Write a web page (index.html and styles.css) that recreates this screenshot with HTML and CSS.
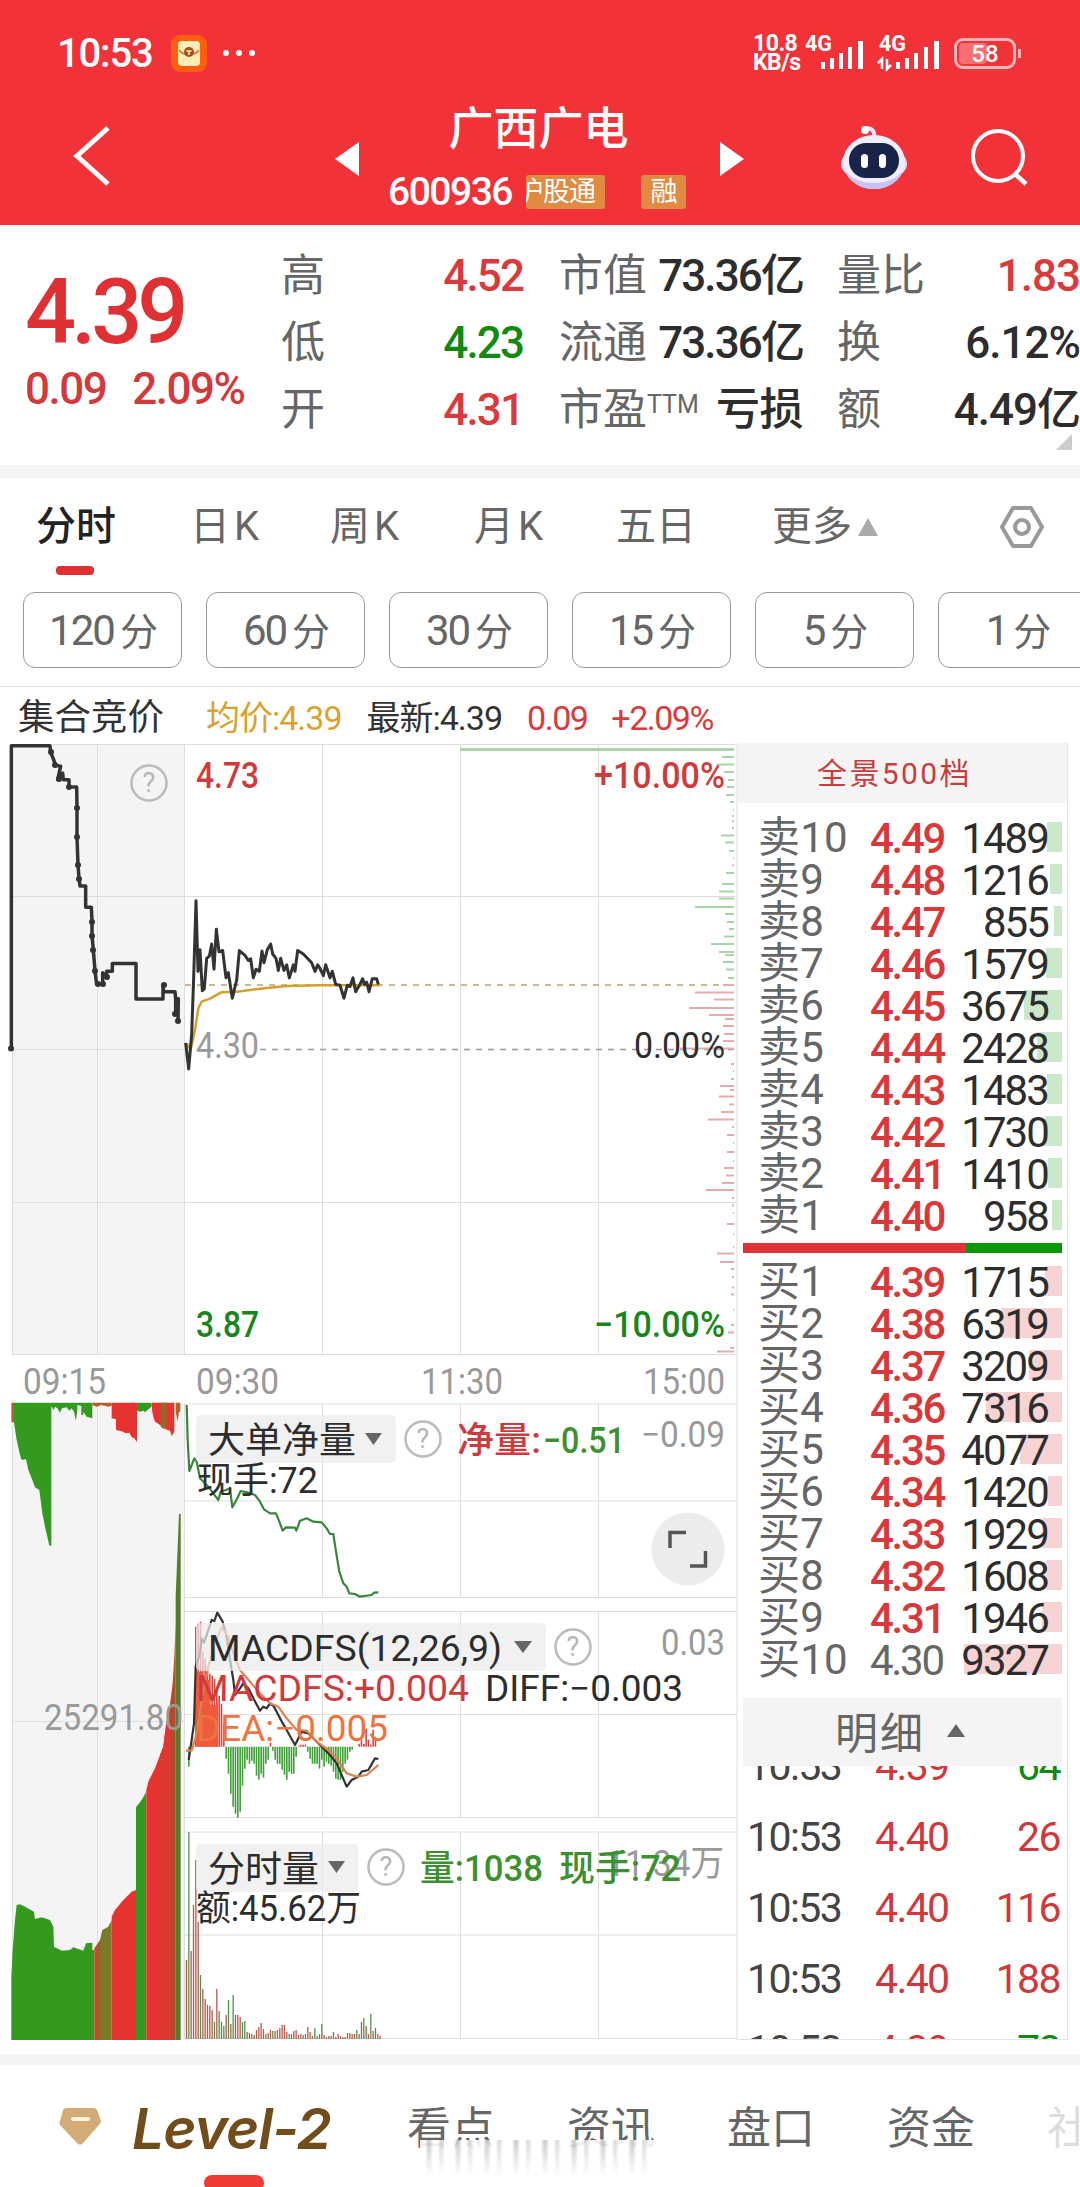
FILE: index.html
```html
<!DOCTYPE html>
<html lang="zh-CN">
<head>
<title>广西广电 600936</title>
<meta charset="utf-8" />
<meta name="viewport" content="width=device-width, initial-scale=1.0" />
<link rel="stylesheet" href="styles.css">
</head>
<body>
<header class="topBar">
<div class="statusBar">
	<span class="clock">10:53</span>
	<svg class="appIcon" width="36" height="37" viewBox="0 0 36 37"><rect width="36" height="37" rx="9" fill="#ff5d10"/><rect x="7" y="6" width="22" height="25" rx="4" fill="#ffedb5"/><path d="M8 15c4 6 16 6 20 0" fill="none" stroke="#c98a3a" stroke-width="2"/><circle cx="18" cy="17" r="5" fill="#a4521c"/><path d="M15.500 16h5M18 16v4" stroke="#ffedb5" stroke-width="1.500"/></svg>
	<svg class="dots" width="34" height="8" viewBox="0 0 34 8" fill="#fff"><circle cx="4" cy="4" r="3"/><circle cx="17" cy="4" r="3"/><circle cx="30" cy="4" r="3"/></svg>
	<span class="speed">10.8<br>KB/s</span>
	<svg class="signals" width="149" height="38" viewBox="0 0 149 38">
		<g fill="#fff">
			<text x="0" y="17" textLength="27" lengthAdjust="spacingAndGlyphs">4G</text>
			<path d="M16 28h4v7h-4zM25 24h4v11h-4zM34 19h4v16h-4zM43 13h4v22h-4zM53 7h5v28h-5z"/>
			<text x="74" y="17" textLength="27" lengthAdjust="spacingAndGlyphs">4G</text>
			<path d="M91 28h4v7h-4zM100 24h4v11h-4zM109 19h4v16h-4zM119 13h4v22h-4zM129 7h5v28h-5z"/>
		</g>
		<path d="M77 35V25l-4 4M82 25v10l4-4" fill="none" stroke="#fff" stroke-width="2.500"/>
	</svg>
	<div class="battery"><i></i><b>58</b></div>
</div>
<div class="titleBar">
	<svg class="back" width="40" height="64" viewBox="0 0 40 64"><path d="M36 4 5 32l31 28" fill="none" stroke="#fff" stroke-width="5"/></svg>
	<svg class="prev" width="24" height="34" viewBox="0 0 24 34"><path d="M24 0v34L0 17z" fill="#fff"/></svg>
	<div class="stock">
		<h1>广西广电</h1>
		<div class="code"><span>600936</span><em class="cut"><i>沪股通</i></em><em class="margin">融</em></div>
	</div>
	<svg class="next" width="24" height="34" viewBox="0 0 24 34"><path d="M0 0v34l24-17z" fill="#fff"/></svg>
	<svg class="robot" width="68" height="66" viewBox="0 0 68 66">
		<path d="M34 12c1-6-2-9-9-9" fill="none" stroke="#e3e3fb" stroke-width="4"/><circle cx="25" cy="5" r="4" fill="#fff"/>
		<rect x="1" y="28" width="66" height="22" rx="11" fill="#dcdcfa"/>
		<ellipse cx="34" cy="37" rx="31" ry="27" fill="#f0edff"/>
		<path d="M6 46c7 24 49 24 56 0-9 16-47 16-56 0z" fill="#c8c2f6"/>
		<rect x="9" y="18" width="50" height="35" rx="17" fill="#182448"/>
		<rect x="21" y="29" width="7" height="14" rx="3.500" fill="#fff"/><rect x="39" y="29" width="7" height="14" rx="3.500" fill="#fff"/>
	</svg>
	<svg class="search" width="60" height="60" viewBox="0 0 60 60"><circle cx="28" cy="28" r="25" fill="none" stroke="#fff" stroke-width="4"/><path d="M45 46 56 56" stroke="#fff" stroke-width="4.500"/></svg>
</div>
</header>

<section class="quote">
<div class="last">
	<div class="price">4.39</div>
	<div class="change"><span>0.09</span><span>2.09%</span></div>
</div>
<dl class="stats high">
	<dt>高</dt><dd class="up">4.52</dd>
	<dt>低</dt><dd class="down">4.23</dd>
	<dt>开</dt><dd class="up">4.31</dd>
</dl>
<dl class="stats cap">
	<dt>市值</dt><dd>73.36亿</dd>
	<dt>流通</dt><dd>73.36亿</dd>
	<dt>市盈<sup>TTM</sup></dt><dd class="loss">亏损</dd>
</dl>
<dl class="stats ratio">
	<dt>量比</dt><dd class="up">1.83</dd>
	<dt>换</dt><dd>6.12%</dd>
	<dt>额</dt><dd>4.49亿</dd>
</dl>
<i class="corner"></i>
</section>

<nav class="tabs">
	<a class="active">分时</a><a class="k">日K</a><a class="k">周K</a><a class="k">月K</a><a>五日</a><a>更多<i></i></a>
	<svg width="44" height="42" viewBox="0 0 44 42" fill="none" stroke="#999" stroke-width="4"><path d="M13 2h18l11 19-11 19H13L2 21z" stroke-linejoin="round"/><circle cx="22" cy="21" r="7"/></svg>
</nav>
<div class="periods">
	<a>120<span>分</span></a><a>60<span>分</span></a><a>30<span>分</span></a><a>15<span>分</span></a><a>5<span>分</span></a><a>1<span>分</span></a>
</div>
<div class="legend">
	<b>集合竞价</b><span class="avg">均价:4.39</span><span>最新:4.39</span><span class="up">0.09</span><span class="up">+2.09%</span>
</div>

<main class="board">
<svg class="chart" width="738" height="1300" viewBox="0 743 738 1300">
	<rect x="12" y="744" width="173" height="610" fill="#f4f4f4"/>
	<rect x="12" y="1403" width="173" height="637" fill="#f4f4f4"/>
	<path class="grid" d="M12 744.500H737M12 896.500H737M12 1049.500H185M12 1202.500H737M12 1354.500H737M12.500 744V1354M97.500 744V1354M184.500 744V1354M322.500 744V1354M460.500 744V1354M598.500 744V1354M737 744V2040M12.500 1403V2040M97.500 1403V2040M184.500 1403V2040M12 1721.500H185"/>
	<path class="grid" d="M185 1404H737M185 1501H737M185 1597.500H737M185 1611.500H737M185 1714.500H737M185 1817.500H737M185 1832H737M185 1935H737M185 2038.500H737M322.500 1404V1597M460.500 1404V1597M598.500 1404V1597M322.500 1611V1817M460.500 1611V1817M598.500 1611V1817M322.500 1832V2038M460.500 1832V2038M598.500 1832V2038"/>

	<path d="M185 985H737" stroke="#b8a468" stroke-width="1.500" stroke-dasharray="6 6"/>
	<path d="M260 1049.500H737" stroke="#999" stroke-width="1.500" stroke-dasharray="6 6"/>
	<g id="depth"></g>

	<g class="line" transform="translate(0 735) scale(.33333 .43365)">
		<path class="thick" d="M34 723V25H150L152 40 160 55 167 70 182 72 173 103 188 88 190 103H207V120H230L231 168 231 235 234 300 237 330 240 348H257V397H274L276 430 276 463 280 495 285 545 290 575H308V548L320 560V545H337V527H408V609H489V577L491 592H525L527 608 527 643 535 608 534 660"/>
		<path class="gold" d="M560 712 572 725 585 680 595 630 605 615 630 608 665 593 710 592 780 585 860 579 960 577 1140 577"/>
		<path d="M557 710 566 770 575 690 581 560 588 382 594 545 600 495 607 590 613 585 620 515 628 510 635 482 642 540 649 448 657 500 668 497 678 560 685 548 697 607 710 565 718 497 735 508 745 520 752 516 760 560 768 540 778 545 786 498 792 525 802 495 812 482 818 505 828 515 835 543 842 515 852 543 860 530 868 560 880 530 885 545 893 497 910 505 935 525 945 545 953 530 960 538 970 555 977 530 990 560 997 545 1007 575 1020 577 1032 607 1042 577 1050 580 1059 560 1067 592 1080 575 1088 562 1093 575 1100 570 1107 592 1117 562 1130 562 1135 575"/>
	</g>
	<g fill="#333"><circle cx="11" cy="1048.500" r="3"/><circle cx="51" cy="752" r="3"/><circle cx="55" cy="765" r="3"/><circle cx="59" cy="779" r="3"/><circle cx="69" cy="787" r="3"/><circle cx="77" cy="808" r="3"/><circle cx="77" cy="837" r="3"/><circle cx="78" cy="865" r="3"/><circle cx="79" cy="879" r="3"/><circle cx="92" cy="922" r="3"/><circle cx="92" cy="936" r="3"/><circle cx="93" cy="950" r="3"/><circle cx="95" cy="971" r="3"/><circle cx="98" cy="984" r="3"/><circle cx="103" cy="984" r="3"/><circle cx="107" cy="977" r="3"/><circle cx="164" cy="985" r="3"/><circle cx="175" cy="1014" r="3"/><circle cx="178" cy="1021" r="3"/></g>

	<!-- auction panel: net volume hangs from the top, matched volume stands on the bottom -->
	<g transform="translate(0 1390) scale(.33333)">
		<path fill="#339a1f" d="M42 38V97L50 150 60 195 65 210 78 207 85 240 95 265 105 292 118 300 127 370 135 410 142 440 148 467H154V38zM154 38V48L160 60 165 50 172 55 180 68 186 55 200 52 208 62 215 55 222 66 228 93 232 60V45L244 48V75H250V65L260 80 277 85V38zM411 38V62L420 65 430 62 435 67 445 58 455 50V38z"/>
		<path fill="#b5602c" d="M34 38V97H42V38zM277 38V45L290 50 305 45 325 50 335 47V38zM527 38V65L533 95 537 65H541V38z"/>
		<path fill="#e73330" d="M335 38V85L348 88V120L370 125 376 130 388 128 395 142 403 145 411 157V38zM456 38V60L460 80 465 95 480 105 497 118 510 122 515 138 523 125V38z"/>
		<path fill="#8c6a2c" d="M482 38V110L492 117 499 105V38z"/>
		<path fill="#339a1f" d="M34 1950V1760L38 1680 45 1590 50 1545 60 1543 75 1550 102 1565 105 1587 125 1582 150 1590 160 1610 162 1670 185 1682 210 1680 220 1672 250 1682 258 1660 277 1658V1680H283V1950zM408 1950V1252L425 1230 439 1205V1950z"/>
		<path fill="#b8522c" d="M283 1950V1675L300 1650V1950z"/>
		<path fill="#7b7a28" d="M300 1950V1650L307 1620 325 1610 335 1590V1950z"/>
		<path fill="#e73330" d="M335 1950V1580L345 1560 370 1530 395 1505 408 1500V1950zM439 1950V1200L445 1175 465 1135 480 1095 490 1070 497 1010 507 960 515 920V1950z"/>
		<path fill="#d63d2e" d="M480 1950V1095L490 1070 497 1010V1950z"/>
		<path fill="#b8482c" d="M510 1950V945L518 880 523 800 527 700V1950z"/>
		<path fill="#557d2a" d="M527 1950V620L533 470 537 372H542V1950z"/>
	</g>

	<g id="macd"></g>
	<g id="volume"></g>
	<g class="line thin" transform="translate(0 1390) scale(.33333)">
		<path class="net" d="M560 45 563 150 568 243 583 205 590 215 600 265 625 290 640 310 655 330 662 305 678 300 690 295 697 352 712 325 722 303 745 308 765 315 780 335 792 358 810 370 828 370 838 395 848 422 858 412 885 413 889 422 900 392 920 385 940 395 965 397 980 415 990 432 1000 432 1008 485 1018 545 1030 580 1040 590 1048 610 1065 612 1080 620 1115 615 1122 608 1135 607"/>
		<path d="M566 1110 575 1050 582 1000 587 830 600 790 605 745 612 758 620 735 635 690 643 693 652 668 668 695 680 740 690 810 700 870 705 915 720 895 730 880 745 895 760 925 780 962 790 950 800 955 810 940 822 950 840 985 860 1020 885 1065 905 1025 925 1030 960 1065 990 1095 1010 1120 1040 1190 1055 1170 1075 1160 1085 1145 1105 1140 1125 1105 1135 1107"/>
		<path class="dea" d="M558 1082H575L590 1030 605 930 625 830 645 760 665 712 685 740 700 790 720 840 750 875 780 910 810 940 835 950 860 985 890 1020 920 1022 950 1055 985 1080 1010 1105 1040 1150 1070 1160 1100 1155 1135 1125"/>
	</g>

	<g class="chip"><rect x="196" y="1415" width="200" height="48" rx="5"/><rect x="196" y="1623" width="350" height="48" rx="5"/><rect x="196" y="1844" width="162" height="48" rx="5"/></g>
	<path fill="#666" d="M365 1433h17l-8.500 12zM514 1641h18l-9 12zM328 1861h17l-8.500 12z"/>
	<g class="help">
		<circle cx="149" cy="783" r="17.500"/><circle cx="423" cy="1439" r="17.500"/><circle cx="573" cy="1647" r="17.500"/><circle cx="386" cy="1867" r="17.500"/>
		<text x="149" y="792">?</text><text x="423" y="1448">?</text><text x="573" y="1656">?</text><text x="386" y="1876">?</text>
	</g>
	<circle cx="688" cy="1549" r="36.500" fill="#ececec"/>
	<path d="M686 1532.500h-16V1548M690 1566h15.500V1551" fill="none" stroke="#555" stroke-width="3.500"/>

	<g class="label">
		<text class="r" x="196" y="788" textLength="63">4.73</text>
		<text class="r" x="594" y="788" textLength="131">+10.00%</text>
		<text class="y" x="196" y="1058" textLength="63">4.30</text>
		<text class="k" x="634" y="1058" textLength="91">0.00%</text>
		<text class="g" x="196" y="1337" textLength="63">3.87</text>
		<text class="g" x="594" y="1337" textLength="131">−10.00%</text>
		<text class="y" x="23" y="1394" textLength="83">09:15</text>
		<text class="y" x="196" y="1394" textLength="83">09:30</text>
		<text class="y" x="421" y="1394" textLength="82">11:30</text>
		<text class="y" x="643" y="1394" textLength="82">15:00</text>
		<text class="y" x="44" y="1730" textLength="139">25291.80</text>
		<text class="k" x="208" y="1453" textLength="148">大单净量</text>
		<text class="r" x="457" y="1453" textLength="84">净量:</text>
		<text class="g2" x="543" y="1453" textLength="82">−0.51</text>
		<text class="y" x="641" y="1447" textLength="84">−0.09</text>
		<text class="k" x="197" y="1493" textLength="121">现手:72</text>
		<text class="k" x="208" y="1661" textLength="294">MACDFS(12,26,9)</text>
		<text class="y" x="661" y="1655" textLength="64">0.03</text>
		<text class="r thinText" x="196" y="1701" textLength="273">MACDFS:+0.004</text>
		<text class="k" x="485" y="1701" textLength="198">DIFF:−0.003</text>
		<text class="o thinText" x="196" y="1741" textLength="192">DEA:−0.005</text>
		<text class="k" x="208" y="1882" textLength="111">分时量</text>
		<text class="y" x="606" y="1876" textLength="118">11.34万</text>
		<text class="g2" x="420" y="1881" textLength="123">量:1038</text>
		<text class="g2" x="559" y="1881" textLength="122">现手:72</text>
		<text class="k" x="196" y="1921" textLength="165">额:45.62万</text>
	</g>
</svg>

<aside class="book">
	<div class="panorama">全景500档</div>
	<ul class="levels sell">
		<li><span>卖10</span><b>4.49</b><em>1489</em><i style="width:15px"></i></li>
		<li><span>卖9</span><b>4.48</b><em>1216</em><i style="width:12px"></i></li>
		<li><span>卖8</span><b>4.47</b><em>855</em><i style="width:8px"></i></li>
		<li><span>卖7</span><b>4.46</b><em>1579</em><i style="width:16px"></i></li>
		<li><span>卖6</span><b>4.45</b><em>3675</em><i style="width:38px"></i></li>
		<li><span>卖5</span><b>4.44</b><em>2428</em><i style="width:25px"></i></li>
		<li><span>卖4</span><b>4.43</b><em>1483</em><i style="width:15px"></i></li>
		<li><span>卖3</span><b>4.42</b><em>1730</em><i style="width:17px"></i></li>
		<li><span>卖2</span><b>4.41</b><em>1410</em><i style="width:14px"></i></li>
		<li><span>卖1</span><b>4.40</b><em>958</em><i style="width:10px"></i></li>
	</ul>
	<div class="balance"><i></i></div>
	<ul class="levels buy">
		<li><span>买1</span><b>4.39</b><em>1715</em><i style="width:17px"></i></li>
		<li><span>买2</span><b>4.38</b><em>6319</em><i style="width:61px"></i></li>
		<li><span>买3</span><b>4.37</b><em>3209</em><i style="width:33px"></i></li>
		<li><span>买4</span><b>4.36</b><em>7316</em><i style="width:76px"></i></li>
		<li><span>买5</span><b>4.35</b><em>4077</em><i style="width:42px"></i></li>
		<li><span>买6</span><b>4.34</b><em>1420</em><i style="width:14px"></i></li>
		<li><span>买7</span><b>4.33</b><em>1929</em><i style="width:20px"></i></li>
		<li><span>买8</span><b>4.32</b><em>1608</em><i style="width:16px"></i></li>
		<li><span>买9</span><b>4.31</b><em>1946</em><i style="width:20px"></i></li>
		<li><span>买10</span><b class="flat">4.30</b><em>9327</em><i style="width:98px"></i></li>
	</ul>
	<div class="detailHead">明细<i></i></div>
	<div class="trades">
		<ul>
			<li><span>10:53</span><b>4.39</b><em class="down">64</em></li>
			<li><span>10:53</span><b>4.40</b><em>26</em></li>
			<li><span>10:53</span><b>4.40</b><em>116</em></li>
			<li><span>10:53</span><b>4.40</b><em>188</em></li>
			<li><span>10:53</span><b>4.39</b><em class="down">72</em></li>
		</ul>
	</div>
</aside>
</main>

<nav class="bottomNav">
	<svg class="gem" width="42" height="37" viewBox="0 0 42 37"><path d="M8 0h26q3 0 4 2l4 11q0 2-2 4L24 35q-3 3-6 0L1 17q-1-2 0-4L4 2q1-2 4-2z" fill="#d2ab76"/><path d="M14 11h15" stroke="#fff4dc" stroke-width="4" stroke-linecap="round"/></svg>
	<a class="level">Level-2</a>
	<a>看点</a><a>资讯</a><a>盘口</a><a>资金</a><a class="faded">社</a>
	<i class="smear"></i>
</nav>
<script src="script.js"></script>
</body>
</html>
```
FILE: styles.css
```css
*{
	padding:0;
	margin:0;
	box-sizing:border-box;
}
body{
	width:1080px;
	height:2187px;
	overflow:hidden;
	background:#fff;
	color:#333;
	font-family:Roboto, "Noto Sans CJK SC", sans-serif;
}
ul{
	list-style:none;
}
i,em{
	font-style:normal;
}
svg{
	display:block;
	flex:none;
}
.up{
	color:#d93a3c !important;
}
.down{
	color:#128a12 !important;
}
.topBar{
	height:225px;
	background:#f13339;
	color:#fff;
}
.statusBar{
	display:flex;
	align-items:center;
	height:106px;
	padding:0 64px 0 57px;
}
.clock{
	width:114px;
	font-size:40px;
	font-weight:500;
	letter-spacing:-1.200px;
}
.dots{
	margin-left:15px;
}
.speed{
	width:52px;
	margin-left:auto;
	font-size:23px;
	line-height:19px;
	font-weight:700;
	letter-spacing:-.5px;
}
.signals text{
	font-size:22px;
	font-weight:700;
}
.battery{
	position:relative;
	width:62px;
	height:31px;
	border:3px solid #f9b5b7;
	border-radius:9px;
	text-align:center;
}
.battery:after{
	content:"";
	position:absolute;
	right:-8px;
	top:8px;
	width:3px;
	height:9px;
	background:#f9b5b7;
}
.battery i{
	position:absolute;
	left:2px;
	top:2px;
	width:28px;
	height:21px;
	border-radius:4px;
	background:#f56f73;
}
.battery b{
	position:relative;
	display:block;
	font-size:24px;
	line-height:26px;
	font-weight:500;
}
.titleBar{
	display:flex;
	height:119px;
	padding-left:72px;
}
.back{
	margin-top:18px;
}
.prev{
	margin:36px 0 0 223px;
}
.stock{
	width:361px;
	padding-left:29px;
}
.stock h1{
	width:301px;
	padding-top:2px;
	text-align:center;
	font-size:45px;
	line-height:44px;
	font-weight:500;
}
.code{
	display:flex;
	height:34px;
	margin-top:23px;
	font-size:39px;
	line-height:35px;
	font-weight:500;
	letter-spacing:-1.500px;
}
.code span{
	width:138px;
}
.code em{
	height:34px;
	overflow:hidden;
	border-radius:3px;
	background:#e18a42;
	font-size:27px;
	line-height:34px;
	font-weight:400;
	letter-spacing:-1px;
	text-align:center;
}
.cut{
	display:flex;
	justify-content:flex-end;
	width:79px;
	margin-right:36px;
	padding-right:10px;
}
.cut i{
	flex:none;
}
.margin{
	width:45px;
}
.next{
	margin-top:36px;
}
.robot{
	margin:19px 0 0 96px;
}
.search{
	margin:22px 0 0 62px;
}
.quote{
	position:relative;
	display:flex;
	height:253px;
	padding-left:25px;
	border-bottom:13px solid #f4f4f4;
}
.last{
	width:256px;
	color:#df3034;
}
.price{
	margin-top:43px;
	font-size:90px;
	line-height:90px;
	font-weight:500;
	letter-spacing:-5px;
}
.change{
	display:flex;
	gap:26px;
	margin-top:8px;
	font-size:44px;
	line-height:46px;
	font-weight:500;
	letter-spacing:-1.500px;
	color:#d2393c;
}
.stats{
	display:grid;
	grid-template-columns:auto auto;
	grid-auto-rows:67px;
	align-content:start;
	justify-content:space-between;
	padding-top:18px;
	font-size:44px;
	line-height:67px;
	white-space:nowrap;
}
.stats dt{
	color:#666;
}
.stats dd{
	text-align:right;
	font-weight:500;
	letter-spacing:-1.900px;
	color:#2d2d2d;
}
.high{
	width:242px;
}
.cap{
	width:244px;
	margin-left:36px;
}
.cap sup{
	font-size:25px;
	line-height:0;
	vertical-align:12px;
}
.cap dt{
	width:0;
}
.cap .loss{
	letter-spacing:-.500px;
}
.ratio{
	width:243px;
	margin-left:34px;
}
.ratio dd{
	letter-spacing:-1px;
}
.corner{
	position:absolute;
	right:8px;
	bottom:15px;
	border-left:16px solid transparent;
	border-bottom:16px solid #ccc;
}
.tabs{
	display:grid;
	grid-template-columns:154px 140px 144px 142px 156px 228px 44px;
	height:114px;
	padding:17px 0 0 36px;
	font-size:40px;
	line-height:64px;
	color:#666;
}
.tabs svg{
	margin-top:11px;
}
.tabs .k{
	letter-spacing:4px;
}
.tabs .active{
	font-weight:500;
	color:#222;
}
.active:after{
	content:"";
	display:block;
	width:38px;
	height:9px;
	margin:7px 0 0 20px;
	border-radius:4px;
	background:#df3034;
}
.tabs a i{
	display:inline-block;
	margin:0 0 4px 6px;
	border:10px solid transparent;
	border-top:0;
	border-bottom:18px solid #aaa;
}
.periods{
	display:flex;
	gap:24px;
	height:94px;
	padding-left:23px;
	overflow:hidden;
}
.periods a{
	display:flex;
	flex:none;
	gap:6px;
	justify-content:center;
	align-items:center;
	width:159px;
	height:76px;
	border:1.500px solid #999;
	border-radius:12px;
	font-size:42px;
	letter-spacing:-2px;
	color:#666;
}
.periods span{
	margin-top:-4px;
	font-size:38px;
}
.legend{
	display:flex;
	height:57px;
	padding-left:18px;
	border-top:1px solid #e4e4e4;
	font-size:34px;
	line-height:62px;
	letter-spacing:-1px;
}
.legend b{
	width:188px;
	font-size:36.500px;
	letter-spacing:0;
	font-weight:400;
}
.legend span{
	margin-right:25px;
}
.legend .up{
	margin-right:24px;
	letter-spacing:-1.500px;
}
.legend .avg{
	color:#d6a32c;
}
.board{
	display:flex;
	height:1311px;
}
.grid{
	fill:none;
	stroke:#dedede;
	stroke-width:1;
}
.line path{
	fill:none;
	stroke:#333;
	stroke-width:3;
	stroke-linejoin:round;
	vector-effect:non-scaling-stroke;
}
.line .thick{
	stroke-width:3.500;
}
.line .gold{
	stroke:#d1a02e;
	stroke-width:2.500;
}
.thin path{
	stroke-width:2.200;
}
.thin .net{
	stroke:#37863a;
}
.thin .dea{
	stroke:#df8050;
}
.chip{
	fill:#ececec;
	opacity:.72;
}
.help circle{
	fill:none;
	stroke:#bbb;
	stroke-width:2.500;
}
.help text{
	fill:#b5b5b5;
	font-size:27px;
	text-anchor:middle;
}
.label text{
	font-size:36.500px;
	font-weight:500;
}
.label .r{
	fill:#cf3a3d;
}
.label .g{
	fill:#1a851c;
}
.label .g2{
	fill:#3c9030;
}
.label .y{
	fill:#999;
	font-weight:400;
}
.label .k{
	fill:#2d2d2d;
	font-weight:400;
}
.label .o{
	fill:#ed7440;
}
.label .thinText{
	font-weight:400;
}
.book{
	width:330px;
	height:1297px;
	border-right:1px solid #e4e4e4;
	border-bottom:1px solid #e4e4e4;
}
.panorama{
	height:60px;
	margin-bottom:14px;
	padding-right:16px;
	background:#f4f4f4;
	text-align:center;
	font-size:30px;
	line-height:62px;
	letter-spacing:2.400px;
	color:#c93c3e;
}
.levels li{
	position:relative;
	display:grid;
	grid-template-columns:112px 76px 1fr;
	height:42px;
	padding:0 19px 0 20px;
	font-size:42px;
	line-height:44px;
	letter-spacing:-1.900px;
	color:#2d2d2d;
}
.levels span{
	font-size:42px;
	line-height:42px;
	letter-spacing:.200px;
	color:#666;
}
.levels b{
	font-weight:500;
	letter-spacing:-2.300px;
	color:#d93739;
}
.levels .flat{
	font-weight:400;
	color:#666;
}
.levels em{
	position:relative;
	z-index:1;
	text-align:right;
}
.levels i{
	position:absolute;
	right:5px;
	top:5px;
	height:30px;
	background:#cbe8cb;
}
.buy i{
	background:#f8d3d4;
}
.balance{
	height:10px;
	margin:6px 5px 8px 5px;
	background:#0a960a;
}
.balance i{
	display:block;
	width:70%;
	height:10px;
	background:#e03236;
}
.detailHead{
	display:flex;
	align-items:center;
	justify-content:center;
	height:68px;
	margin:17px 5px 0 5px;
	padding:0 5px 4px 0;
	background:#f4f4f4;
	font-size:43px;
	letter-spacing:2px;
	color:#666;
}
.detailHead i{
	margin-left:22px;
	border:9px solid transparent;
	border-top:0;
	border-bottom:13px solid #666;
}
.trades{
	height:273px;
	overflow:hidden;
}
.trades ul{
	margin-top:-36px;
}
.trades li{
	display:grid;
	grid-template-columns:128px 76px 1fr;
	height:71px;
	padding:0 7px 0 9px;
	font-size:41px;
	line-height:72px;
	letter-spacing:-1.600px;
	color:#444;
}
.trades b,.trades em{
	font-weight:400;
	color:#cf393b;
}
.trades em{
	text-align:right;
}
.bottomNav{
	position:relative;
	display:flex;
	height:133px;
	padding:33px 0 0 59px;
	border-top:11px solid #f4f4f4;
	overflow:hidden;
	font-size:44px;
	line-height:62px;
	color:#666;
}
.gem{
	margin-top:10px;
}
.bottomNav a{
	flex:none;
	width:160px;
}
.bottomNav .level{
	width:306px;
	padding-left:31px;
	font-family:Inter, sans-serif;
	font-size:57px;
	font-weight:600;
	font-style:italic;
	letter-spacing:-1px;
	color:#704d1b;
}
.level:after{
	content:"";
	display:block;
	width:60px;
	height:16px;
	margin:15px 0 0 72px;
	border-radius:8px;
	background:#f03a35;
}
.bottomNav .faded{
	width:32px;
	overflow:hidden;
	color:#ddd;
}
.smear{
	position:absolute;
	left:420px;
	top:75px;
	width:235px;
	height:36px;
	opacity:.9;
	background:
		linear-gradient(rgba(255,255,255,.2), #fff),
		repeating-linear-gradient(90deg, #fff 0 5px, #bbb 8px 10px, #fff 13px 18px, #d0d0d0 20px 22px, #fff 25px 29px);
}
```
FILE: script.js
```js
// Draws the bar series of the charts: [position, size] pairs in pixels.
const RED = "#e0413e";
const GREEN = "#3f9f35";

function bar(group, d, color, width) {
  const path = document.createElementNS("http://www.w3.org/2000/svg", "path");
  path.setAttribute("d", d);
  path.setAttribute("stroke", color);
  path.setAttribute("stroke-width", width);
  document.getElementById(group).appendChild(path);
}

// squeeze the glyphs of the chart labels, not only the gaps between them
document.querySelectorAll(".label text").forEach(t => t.setAttribute("lengthAdjust", "spacingAndGlyphs"));

// order depth along the right edge, y and length
const asks = [[757,12],[764.500,17],[772,10],[780,6],[787,7],[795,8],[802,4],[810,1],[816,2],[821,2],[828,2],[835.500,13],[842.500,9],[851,5],[858,1],[865.500,2],[873,8],[884,12],[891.500,15],[898.500,15],[907,39],[914,9],[922,7],[929,5],[936.500,10],[944,23],[952,15],[955,9],[962,11],[969.500,8],[978,6]];
const bids = [[985,11],[992.500,39],[999.500,20],[1008,45],[1015,25],[1019,9],[1026,11],[1034,10],[1041,11],[1048.500,54],[1064,3],[1071,1],[1079,3],[1086,14],[1090,4],[1096.500,15],[1104.500,5],[1112,13],[1119.500,26],[1127,2],[1135,7],[1143,1],[1152,7],[1161,1],[1168,10],[1175.500,8],[1183,12],[1190,28],[1198,2],[1205.500,2],[1213,1],[1224,7],[1234,1],[1247,1],[1253.500,17],[1262,14],[1269,3],[1277,2],[1287.500,2],[1294.500,3],[1310,1],[1325,3],[1332.500,6],[1348,4],[1351.500,17]];
asks.forEach(([y, w]) => bar("depth", `M734 ${y}h${-w}`, "#a5d5a5", 2));
bids.forEach(([y, w]) => bar("depth", `M734 ${y}h${-w}`, "#e8abad", 2));
bar("depth", "M734 749.500H460", "#9bd09b", 2.500);

// MACD histogram, one bar every 2.33px from the zero line
const histogram = [0,-20,0,0,120,123,125,95,88,80,73,71,68,58,51,43,23,-12,-27,-47,-60,-67,-71,-65,-39,-22,-13,-17,-14,-17,-29,-33,-27,-31,-17,-13,4,-4,-13,-17,-17,-23,-28,-33,-25,-27,-27,-10,1,2,2,2,-5,-12,-17,-17,-17,-22,-13,-20,-15,-17,-19,-25,-32,-33,-33,-25,-17,-13,-5,-3,0,0,3,7,3,18,7,2,17,10];
histogram.forEach((v, i) => bar("macd", `M${186.500 + i * 2.333} 1746.700v${-v}`, v > 0 ? RED : GREEN, 1.600));
bar("macd", "M199 1746.700V1672", "#ef5a3a", 7);
bar("macd", "M206 1746.700V1680", "#ef5a3a", 8);
bar("macd", "M214 1746.700V1705", "#ef5a3a", 8);

// minute volume
const volume = [79,207,88,134,179,117,64,50,40,34,33,29,17,50,28,17,13,24,39,15,44,24,24,22,17,18,7,6,5,4,9,12,16,10,5,6,9,8,8,9,11,14,14,7,5,5,8,9,4,5,4,5,12,7,3,11,3,5,15,4,2,3,3,7,2,5,3,2,2,6,6,5,5,9,5,17,21,13,5,25,8,11,5,3];
const falling = [1,6,12,14,15,16,18,20,24,25,28,34,37,44,50,55,58,62,68,73,76,79];
volume.forEach((v, i) => bar("volume", `M${186.500 + i * 2.333} 2039v${-v}`, falling.includes(i) ? "#4c944b" : "#b8574a", 1.300));
```
